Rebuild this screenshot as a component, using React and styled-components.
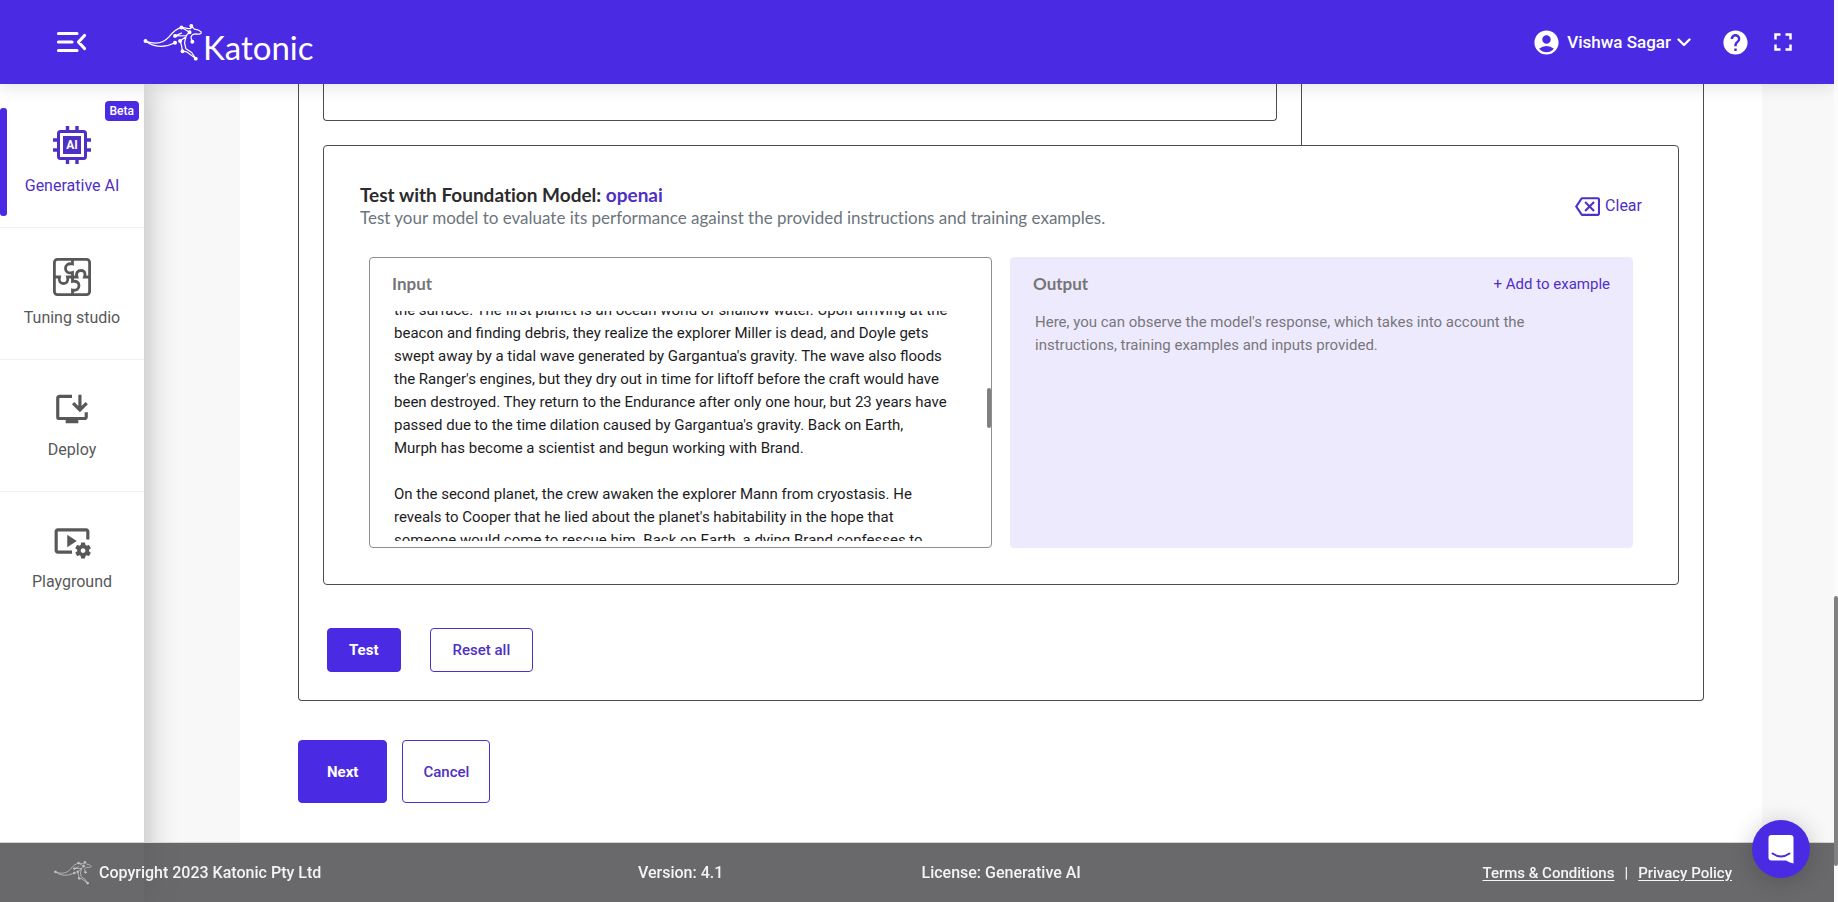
import React, { useLayoutEffect, useRef } from "react";
import styled, { createGlobalStyle } from "styled-components";
import {
  MdAccountCircle,
  MdHelp,
  MdFullscreen,
  MdOutlineBackspace,
  MdInstallDesktop,
  MdVideoSettings,
} from "react-icons/md";

const violet = "#4b2ae3";
const violetText = "#4f30c4";
const line = "#4d4d4f";

const GlobalStyle = createGlobalStyle`
  *, *::before, *::after { box-sizing: border-box; }
  body {
    margin: 0;
    background: #f8f8f8;
    font-family: Roboto, "Liberation Sans", sans-serif;
    color: #4a4a4a;
  }
  html { scrollbar-width: none; }
  button, textarea { font: inherit; }
  h2, p { margin: 0; }
  svg { display: block; flex: none; }
`;

const Page = styled.div`
  display: grid;
  grid-template-columns: minmax(0, 1fr) 4px;
  min-height: 100vh;
`;

const Shell = styled.div`
  display: flex;
  flex-direction: column;
`;

const ScrollTrack = styled.div`
  background: #fbfbfb;
  position: sticky;
  top: 0;
  height: 100vh;
  z-index: 5;
  display: flex;
  flex-direction: column;
  padding-top: 596px;
`;

const ScrollThumb = styled.div`
  height: ${(p) => p.$size}px;
  width: 4px;
  border-radius: 2px;
  background: #808080;
`;

const Header = styled.header`
  position: sticky;
  top: 0;
  z-index: 3;
  height: 84px;
  display: flex;
  align-items: center;
  padding: 0 36px 0 56px;
  background: ${violet};
  color: #fff;
  box-shadow: 0 4px 16px rgba(0, 0, 0, 0.1);
`;

const PlainButton = styled.button`
  display: flex;
  align-items: center;
  gap: ${(p) => p.$gap || 0}px;
  padding: 0;
  border: 0;
  background: none;
  color: inherit;
  cursor: pointer;
`;

const Brand = styled.a`
  display: flex;
  align-items: flex-start;
  margin-left: 56px;
  padding-top: 3px;
  color: #fff;
  text-decoration: none;
`;

const WordMark = styled.span`
  font-family: Lato, "Liberation Sans", sans-serif;
  font-size: 33px;
  line-height: 34px;
  padding-top: 7px;
`;

const HeaderTools = styled.div`
  display: flex;
  align-items: center;
  margin-left: auto;
  gap: ${(p) => p.$gap}px;
`;

const UserName = styled.span`
  font-size: 17px;
  line-height: 24px;
  font-weight: 500;
`;

const Columns = styled.div`
  flex: 1;
  display: grid;
  grid-template-columns: 144px minmax(0, 1fr);
`;

const Sidebar = styled.nav`
  background: #fff;
  padding-top: 12px;
  box-shadow: 4px 0 28px rgba(0, 0, 0, 0.24);
  z-index: 1;
`;

const NavItem = styled.a`
  position: relative;
  display: flex;
  flex-direction: column;
  align-items: center;
  gap: 12px;
  height: 132px;
  padding-top: 30px;
  border-bottom: ${(p) => (p.$last ? 0 : 1)}px solid #f0f0f0;
  color: ${(p) => (p.$active ? violetText : "#58585a")};
  font-size: 16px;
  line-height: 20px;
  text-decoration: none;
`;

const ActiveBar = styled.span`
  position: absolute;
  left: 0;
  top: 12px;
  width: 7px;
  height: 108px;
  border-radius: 3px;
  background: ${violet};
`;

const Badge = styled.span`
  position: absolute;
  top: 5px;
  right: 5px;
  padding: 0 5px;
  border-radius: 4px;
  background: ${violet};
  color: #fff;
  font-size: 12px;
  line-height: 20px;
  font-weight: 500;
`;

const Main = styled.main`
  margin: 0 72px 0 96px;
  padding: 0 58px 98px;
  background: #fff;
`;

const Workspace = styled.section`
  padding: 0 24px 28px;
  border: 1px solid ${line};
  border-top: 0;
  border-radius: 0 0 4px 4px;
`;

const ExamplesRow = styled.div`
  display: grid;
  grid-template-columns: minmax(0, 1fr) 378px;
  height: 61px;
`;

const ExamplesBox = styled.div`
  height: 37px;
  margin-right: 24px;
  border: 1px solid ${line};
  border-top: 0;
  border-radius: 0 0 4px 4px;
`;

const ExamplesSide = styled.div`
  border-left: 1px solid ${line};
`;

const TestCard = styled.section`
  padding: 37px 36px 36px;
  border: 1px solid ${line};
  border-radius: 4px;
`;

const TestHead = styled.div`
  display: flex;
  align-items: center;
  justify-content: space-between;
  color: ${violetText};
`;

const Title = styled.h2`
  font-family: Lato, "Liberation Sans", sans-serif;
  font-size: 19px;
  line-height: 24px;
  font-weight: 700;
  font-variant-ligatures: none;
  color: #2b2b2d;
`;

const ModelName = styled.span`
  color: ${violetText};
`;

const Subtitle = styled.p`
  font-family: Lato, "Liberation Sans", sans-serif;
  font-size: 17px;
  line-height: 22px;
  font-variant-ligatures: none;
  color: #6c757d;
`;

const ClearText = styled.span`
  font-size: 16px;
  line-height: 24px;
`;

const Panels = styled.div`
  display: grid;
  grid-template-columns: 1fr 1fr;
  gap: 18px;
  margin-top: 28px;
  padding: 0 9px;
`;

const Panel = styled.div`
  position: relative;
  height: 291px;
  padding: 16px 22px 6px;
  border: 1px solid ${(p) => (p.$filled ? "#eeeafe" : "#8e8e90")};
  border-radius: 4px;
  background: ${(p) => (p.$filled ? "#eeeafe" : "#fff")};
`;

const PanelHead = styled.div`
  display: flex;
  align-items: center;
  justify-content: space-between;
  height: 20px;
  color: ${violetText};
  font-size: 15px;
`;

const PanelTitle = styled.label`
  font-family: Lato, "Liberation Sans", sans-serif;
  font-size: 17px;
  line-height: 20px;
  font-weight: 700;
  color: #757577;
`;

const InputArea = styled.textarea`
  display: block;
  width: 100%;
  height: 230px;
  margin-top: 17px;
  padding: 0 19px 0 2px;
  border: 0;
  outline: 0;
  resize: none;
  background: none;
  color: #1c1c1e;
  font-size: 15px;
  line-height: 23px;
  scrollbar-width: none;
`;

const InputThumb = styled(ScrollThumb)`
  position: absolute;
  right: 0;
  top: 130px;
`;

const OutputText = styled.output`
  display: block;
  margin-top: 17px;
  padding: 0 42px 0 2px;
  color: #77777b;
  font-size: 15px;
  line-height: 23px;
`;

const Actions = styled.div`
  display: flex;
  gap: ${(p) => p.$gap}px;
  margin: ${(p) => p.$margin};
`;

const Button = styled.button`
  height: ${(p) => (p.$tall ? 63 : 44)}px;
  padding: 0 ${(p) => p.$pad}px;
  border: 1px solid ${(p) => (p.$primary ? violet : violetText)};
  border-radius: 4px;
  background: ${(p) => (p.$primary ? violet : "#fff")};
  color: ${(p) => (p.$primary ? "#fff" : violetText)};
  font-size: 15px;
  font-weight: ${(p) => (p.$primary ? 700 : 500)};
  cursor: pointer;
`;

const Footer = styled.footer`
  position: fixed;
  left: 0;
  right: 4px;
  bottom: 0;
  z-index: 4;
  height: 60px;
  display: grid;
  grid-template-columns: 583fr 283fr 560fr auto;
  align-items: center;
  padding: 0 102px 0 54px;
  border-top: 1px solid #d4d4d4;
  background: rgba(84, 84, 87, 0.88);
  background-clip: padding-box;
  color: #f4f4f4;
  font-size: 16px;
  line-height: 20px;
  font-weight: 500;
`;

const FooterGroup = styled.div`
  display: flex;
  align-items: center;
  gap: ${(p) => p.$gap}px;
  font-size: ${(p) => p.$size || 16}px;
`;

const FooterLink = styled.a`
  color: inherit;
  text-underline-offset: 2px;
`;

const ChatButton = styled.button`
  position: fixed;
  right: 28px;
  bottom: 24px;
  z-index: 6;
  width: 58px;
  height: 58px;
  display: grid;
  place-items: center;
  padding: 0;
  border: 0;
  border-radius: 50%;
  background: ${violet};
  box-shadow: 0 2px 24px rgba(0, 0, 0, 0.2);
  cursor: pointer;
`;

function Kangaroo({ width, height, color }) {
  const joints = [
    [30, 73], [136, 33], [117, 58], [117, 78], [165, 29],
    [160, 47], [168, 75], [132, 73], [139, 103], [178, 125],
  ];
  return (
    <svg width={width} height={height} viewBox="24 20 174 112" fill="none" stroke={color} strokeWidth="3.6" strokeLinecap="round" strokeLinejoin="round" aria-hidden="true">
      <path d="M30 73C62 86 84 78 100 60C112 45 122 37 136 33C146 33 156 38 164 36" />
      <path d="M30 73C56 94 90 92 117 78" />
      <path d="M117 58L150 57L160 47L136 33M117 58L136 50" />
      <path d="M165 29L174 38C184 39 190 42 194 46C196 52 188 54 180 52C168 52 164 58 164 64L168 75" />
      <path d="M132 73L136 86L139 103L151 105L178 125M150 57L145 78L149 96L166 107L178 125M132 73L150 60" />
      {joints.map(([x, y]) => (
        <circle key={`${x}-${y}`} cx={x} cy={y} r="4" fill={color} />
      ))}
    </svg>
  );
}

function MenuIcon() {
  return (
    <svg width="31" height="22" viewBox="0 0 31 22" fill="none" stroke="#fff" strokeWidth="3.2" strokeLinecap="round" strokeLinejoin="round" aria-hidden="true">
      <path d="M2.5 2.5H21M2.5 11H16M2.5 19.5H21M28.5 4.5L22.5 11L28.5 17.5" />
    </svg>
  );
}

function ChipIcon() {
  return (
    <svg width="38" height="38" viewBox="0 0 38 38" aria-hidden="true">
      <path d="M14.5 0V5M24 0V5M14.5 33V38M24 33V38M0 14H5M0 24H5M33 14H38M33 24H38" stroke={violetText} strokeWidth="3.4" />
      <rect x="5.5" y="5.5" width="27" height="27" rx="2" fill="#fff" stroke={violetText} strokeWidth="3" />
      <rect x="10" y="10" width="18" height="18" fill={violetText} />
      <text x="19" y="23" fill="#fff" fontSize="12" fontWeight="700" textAnchor="middle" fontFamily="Roboto, sans-serif">AI</text>
    </svg>
  );
}

function PuzzleIcon() {
  return (
    <svg width="38" height="38" viewBox="0 0 38 38" fill="none" stroke="#58585a" strokeWidth="2.8" aria-hidden="true">
      <rect x="1.4" y="1.4" width="35.2" height="35.2" rx="3" />
      <path d="M19.5 2V6C14.500 5 12.500 7.500 12.500 10.500C12.500 13.500 15 16 19.500 14.500V23.500C23.500 22.500 26 24.500 26 27.500C26 31 23.500 33 19.500 32V36" />
      <path d="M2 19H6.500C5.500 23.500 7.500 25.500 10.500 25.500C13.500 25.500 15.500 23.500 14.500 19H24C22.500 14.500 25 12.500 28 12.500C31 12.500 33 14.500 31.500 19H36" />
    </svg>
  );
}

function ChevronIcon() {
  return (
    <svg width="14" height="9" viewBox="0 0 14 9" fill="none" stroke="#fff" strokeWidth="2.4" strokeLinecap="round" strokeLinejoin="round" aria-hidden="true">
      <path d="M1.500 1.500L7 7L12.500 1.500" />
    </svg>
  );
}

function ChatIcon() {
  return (
    <svg width="26" height="30" viewBox="0 0 26 30" aria-hidden="true">
      <path d="M3.500 1H22.500Q25.500 1 25.500 4V29.500Q21 28.500 18 26.500H3.500Q.5 26.500 .5 23.500V4Q.5 1 3.500 1Z" fill="#fff" />
      <path d="M4.500 19.500Q13 25.500 21.500 19.500" fill="none" stroke={violet} strokeWidth="2" strokeLinecap="round" />
    </svg>
  );
}

const navItems = [
  { label: "Generative AI", icon: <ChipIcon />, active: true },
  { label: "Tuning studio", icon: <PuzzleIcon /> },
  { label: "Deploy", icon: <MdInstallDesktop size={38} /> },
  { label: "Playground", icon: <MdVideoSettings size={38} /> },
];

const story = `the surface. The first planet is an ocean world of shallow water. Upon arriving at the beacon and finding debris, they realize the explorer Miller is dead, and Doyle gets swept away by a tidal wave generated by Gargantua's gravity. The wave also floods the Ranger's engines, but they dry out in time for liftoff before the craft would have been destroyed. They return to the Endurance after only one hour, but 23 years have passed due to the time dilation caused by Gargantua's gravity. Back on Earth, Murph has become a scientist and begun working with Brand.

On the second planet, the crew awaken the explorer Mann from cryostasis. He reveals to Cooper that he lied about the planet's habitability in the hope that someone would come to rescue him. Back on Earth, a dying Brand confesses to`;

export default function App() {
  const inputRef = useRef(null);

  useLayoutEffect(() => {
    inputRef.current.scrollTop = 12;
  }, []);

  return (
    <>
      <GlobalStyle />
      <Page>
        <Shell>
          <Header>
            <PlainButton type="button" aria-label="Collapse menu">
              <MenuIcon />
            </PlainButton>
            <Brand href="#" aria-label="Katonic">
              <Kangaroo width={60} height={38} color="#fff" />
              <WordMark>Katonic</WordMark>
            </Brand>
            <HeaderTools $gap={30}>
              <PlainButton type="button" $gap={6}>
                <MdAccountCircle size={29} />
                <UserName>Vishwa Sagar</UserName>
                <ChevronIcon />
              </PlainButton>
              <HeaderTools $gap={18}>
                <PlainButton type="button" aria-label="Help">
                  <MdHelp size={29} />
                </PlainButton>
                <PlainButton type="button" aria-label="Full screen">
                  <MdFullscreen size={30} />
                </PlainButton>
              </HeaderTools>
            </HeaderTools>
          </Header>

          <Columns>
            <Sidebar>
              {navItems.map((item, i) => (
                <NavItem key={item.label} href="#" $active={item.active} $last={i === navItems.length - 1}>
                  {item.active && <ActiveBar />}
                  {item.active && <Badge>Beta</Badge>}
                  {item.icon}
                  {item.label}
                </NavItem>
              ))}
            </Sidebar>

            <Main>
              <Workspace>
                <ExamplesRow>
                  <ExamplesBox />
                  <ExamplesSide />
                </ExamplesRow>
                <TestCard>
                  <TestHead>
                    <div>
                      <Title>
                        Test with Foundation Model: <ModelName>openai</ModelName>
                      </Title>
                      <Subtitle>
                        Test your model to evaluate its performance against the provided instructions and training examples.
                      </Subtitle>
                    </div>
                    <PlainButton type="button" $gap={5}>
                      <MdOutlineBackspace size={25} />
                      <ClearText>Clear</ClearText>
                    </PlainButton>
                  </TestHead>
                  <Panels>
                    <Panel>
                      <PanelHead>
                        <PanelTitle htmlFor="model-input">Input</PanelTitle>
                      </PanelHead>
                      <InputArea id="model-input" ref={inputRef} defaultValue={story} spellCheck={false} />
                      <InputThumb $size={40} />
                    </Panel>
                    <Panel $filled>
                      <PanelHead>
                        <PanelTitle htmlFor="model-output">Output</PanelTitle>
                        <PlainButton type="button">+ Add to example</PlainButton>
                      </PanelHead>
                      <OutputText id="model-output">
                        Here, you can observe the model's response, which takes into account the instructions, training examples and inputs provided.
                      </OutputText>
                    </Panel>
                  </Panels>
                </TestCard>
                <Actions $gap={29} $margin="43px 4px 0">
                  <Button type="button" $primary $pad={21}>Test</Button>
                  <Button type="button" $pad={22}>Reset all</Button>
                </Actions>
              </Workspace>
              <Actions $gap={15} $margin="39px 0 0">
                <Button type="button" $primary $tall $pad={28}>Next</Button>
                <Button type="button" $tall $pad={20}>Cancel</Button>
              </Actions>
            </Main>
          </Columns>
        </Shell>
        <ScrollTrack>
          <ScrollThumb $size={270} />
        </ScrollTrack>
      </Page>

      <Footer>
        <FooterGroup $gap={7}>
          <Kangaroo width={38} height={25} color="#c4c4c4" />
          Copyright 2023 Katonic Pty Ltd
        </FooterGroup>
        <span>Version: 4.1</span>
        <span>License: Generative AI</span>
        <FooterGroup $gap={10} $size={15}>
          <FooterLink href="#">Terms &amp; Conditions</FooterLink>
          <span>|</span>
          <FooterLink href="#">Privacy Policy</FooterLink>
        </FooterGroup>
      </Footer>

      <ChatButton type="button" aria-label="Open chat">
        <ChatIcon />
      </ChatButton>
    </>
  );
}
